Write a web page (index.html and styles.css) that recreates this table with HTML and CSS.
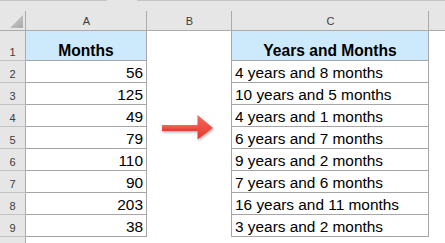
FILE: index.html
```html
<!DOCTYPE html>
<html>
<head>
<meta charset="utf-8">
<link rel="stylesheet" href="styles.css">
</head>
<body>
<div class="sheet">
  <div class="topline"></div>

  <div class="corner"><svg class="tri" width="13" height="13" viewBox="0 0 13 13"><defs><linearGradient id="tg" x1="0" y1="0" x2="1" y2="1"><stop offset="0" stop-color="#cfcfcf"/><stop offset="1" stop-color="#a9a9a9"/></linearGradient></defs><polygon points="13,0 13,13 0,13" fill="url(#tg)"/></svg></div>
  <div class="colhead">A</div>
  <div class="colhead">B</div>
  <div class="colhead">C</div>
  <div class="colhead last"></div>

  <div class="rowhead">1</div>
  <div class="cell hdr">Months</div>
  <div class="cell b"></div>
  <div class="cell hdr">Years and Months</div>
  <div class="cell d"></div>

  <div class="rowhead">2</div>
  <div class="cell num">56</div>
  <div class="cell b"></div>
  <div class="cell txt">4 years and 8 months</div>
  <div class="cell d"></div>

  <div class="rowhead">3</div>
  <div class="cell num">125</div>
  <div class="cell b"></div>
  <div class="cell txt">10 years and 5 months</div>
  <div class="cell d"></div>

  <div class="rowhead">4</div>
  <div class="cell num">49</div>
  <div class="cell b"></div>
  <div class="cell txt">4 years and 1 months</div>
  <div class="cell d"></div>

  <div class="rowhead">5</div>
  <div class="cell num">79</div>
  <div class="cell b"></div>
  <div class="cell txt">6 years and 7 months</div>
  <div class="cell d"></div>

  <div class="rowhead">6</div>
  <div class="cell num">110</div>
  <div class="cell b"></div>
  <div class="cell txt">9 years and 2 months</div>
  <div class="cell d"></div>

  <div class="rowhead">7</div>
  <div class="cell num">90</div>
  <div class="cell b"></div>
  <div class="cell txt">7 years and 6 months</div>
  <div class="cell d"></div>

  <div class="rowhead">8</div>
  <div class="cell num">203</div>
  <div class="cell b"></div>
  <div class="cell txt">16 years and 11 months</div>
  <div class="cell d"></div>

  <div class="rowhead">9</div>
  <div class="cell num">38</div>
  <div class="cell b"></div>
  <div class="cell txt">3 years and 2 months</div>
  <div class="cell d"></div>

  <div class="rowhead end"></div>
  <div class="blank"></div>
  <div class="blank"></div>
  <div class="blank"></div>
  <div class="blank"></div>

  <svg class="arrow" width="62" height="38" viewBox="0 0 62 38">
    <defs>
      <linearGradient id="ag" x1="0" y1="0" x2="0" y2="1">
        <stop offset="0" stop-color="#f7665a"/>
        <stop offset="1" stop-color="#e4382e"/>
      </linearGradient>
      <filter id="sh" x="-20%" y="-20%" width="140%" height="160%">
        <feDropShadow dx="1" dy="1.5" stdDeviation="1" flood-color="#000" flood-opacity="0.3"/>
      </filter>
    </defs>
    <g filter="url(#sh)" fill="url(#ag)">
      <rect x="7" y="15" width="37" height="6"/>
      <polygon points="42.5,5 58,18 42.5,29.5"/>
    </g>
  </svg>
</div>
</body>
</html>
```

FILE: styles.css
```css
html, body {
  margin: 0;
  padding: 0;
  background: #ffffff;
}

.sheet {
  position: relative;
  width: 445px;
  height: 243px;
  display: grid;
  grid-template-columns: 26px 121px 85px 197px 1fr;
  grid-template-rows: 1px 30px 30px repeat(8, 22px) 1fr;
  font-family: "Liberation Sans", Arial, sans-serif;
  overflow: hidden;
}

.topline {
  grid-column: 1 / -1;
  background: linear-gradient(to right, #c4c4c4 107px, #e6e6e6 107px, #e6e6e6 137px, #c4c4c4 137px);
}

.corner,
.colhead {
  background: linear-gradient(#ababab, #ababab) right bottom / 1px 19px no-repeat, #e6e6e6;
  border-bottom: 1px solid #ababab;
}

.corner {
  display: flex;
  justify-content: flex-end;
  align-items: flex-end;
  padding: 0 3px 2px 0;
}

.tri {
  display: block;
}

.colhead {
  display: flex;
  justify-content: center;
  align-items: flex-end;
  padding-bottom: 2px;
  font-size: 11px;
  line-height: 13px;
  color: #3c3c3c;
}

.colhead.last {
  background: #e6e6e6;
}

.rowhead {
  background: #e6e6e6;
  border-right: 1px solid #ababab;
  border-bottom: 1px solid #c2c2c2;
  display: flex;
  justify-content: center;
  align-items: flex-end;
  padding-bottom: 1px;
  font-size: 11px;
  line-height: 13px;
  color: #3c3c3c;
}

.rowhead.end {
  border-bottom: none;
}

.cell {
  display: flex;
  align-items: flex-end;
  padding: 0 3px 1px 3px;
  border-right: 1px solid #a6a6a6;
  border-bottom: 1px solid #a6a6a6;
  font-size: 15.4px;
  line-height: 17px;
  color: #000;
  white-space: nowrap;
}

.cell.hdr {
  background: #cdeafd;
  justify-content: center;
  font-weight: bold;
  font-size: 15.6px;
}

.cell.num {
  justify-content: flex-end;
}

.cell.txt {
  justify-content: flex-start;
  padding-left: 3px;
}

.cell.b {
  border-bottom: none;
}

.cell.d {
  border: none;
}

.blank {
  background: #ffffff;
}

.arrow {
  position: absolute;
  left: 155px;
  top: 110px;
}
```
